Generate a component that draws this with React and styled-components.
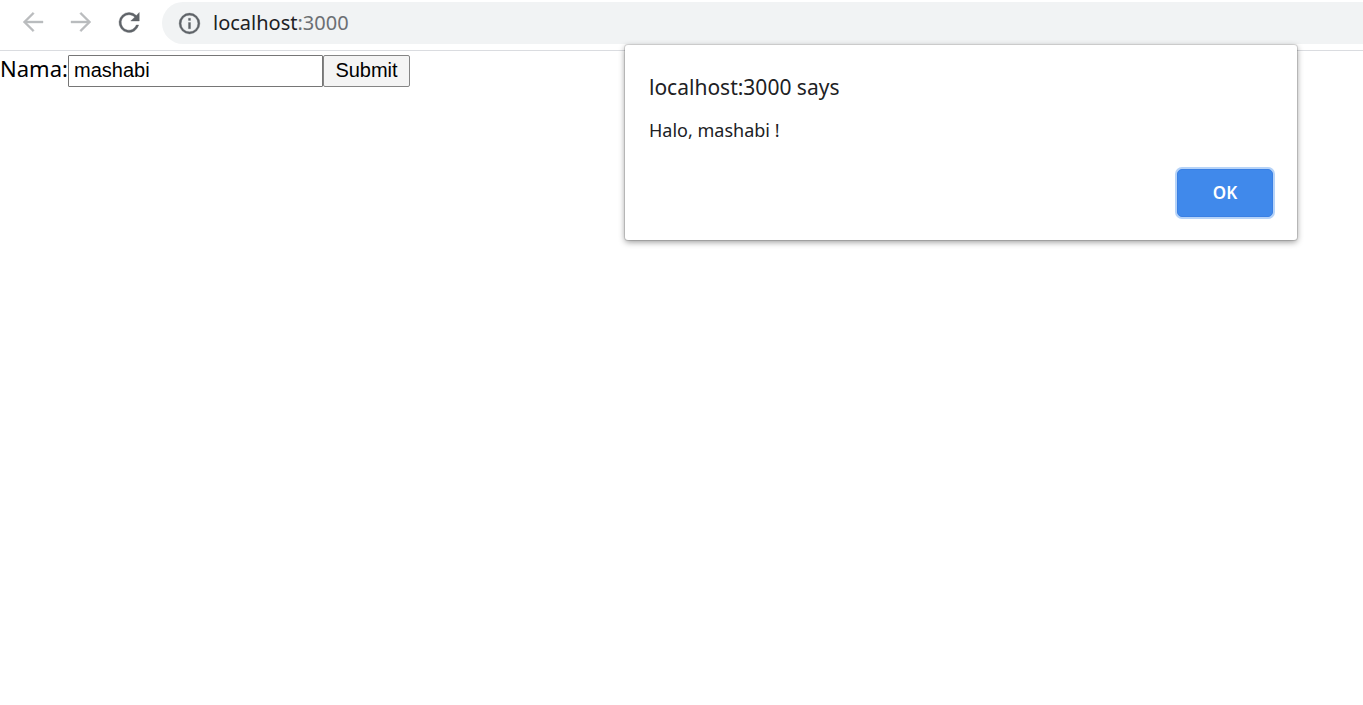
import React from "react";
import styled, { createGlobalStyle } from "styled-components";

const GlobalStyle = createGlobalStyle`
  * { box-sizing: border-box; }
  body {
    margin: 0;
    background: #fff;
    font-family: "Noto Sans", "Open Sans", sans-serif;
  }
`;

const Page = styled.div`
  position: relative;
  min-height: 100vh;
`;

const Toolbar = styled.header`
  display: flex;
  align-items: flex-start;
  height: 51px;
  padding: 2px 0 0 18px;
  border-bottom: 1px solid #dadce0;
`;

const NavButtons = styled.nav`
  display: flex;
  gap: 18px;
  padding: 5px 18px 0 0;
`;

const NavButton = styled.button`
  display: flex;
  width: 30px;
  height: 30px;
  padding: 0;
  border: 0;
  background: none;
  color: ${({ disabled }) => (disabled ? "#babcbe" : "#5f6368")};
`;

const Icon = styled.svg`
  width: ${({ $size }) => $size}px;
  height: ${({ $size }) => $size}px;
  fill: currentColor;
  stroke: currentColor;
  stroke-width: 0.3;
`;

const AddressBar = styled.div`
  flex: 1;
  display: flex;
  align-items: center;
  gap: 11px;
  height: 42px;
  padding-left: 15px;
  border-radius: 21px 0 0 21px;
  background: #f1f3f4;
  color: #5f6368;
`;

const Address = styled.span`
  font-size: 20px;
  line-height: 28px;
  color: #6b6f73;
`;

const Host = styled.span`
  color: #202124;
`;

const Form = styled.form`
  display: flex;
  align-items: flex-start;
  padding-top: 4px;
`;

const Label = styled.label`
  width: 68px;
  font-size: 22px;
  line-height: 26px;
  color: #000;
`;

const NameInput = styled.input`
  width: 255px;
  height: 32px;
  padding: 0 5px 2px;
  border: 1px solid #767676;
  border-radius: 1px;
  outline: 0;
  background: #fff;
  color: #000;
  font: 20px "Liberation Sans", Arial, sans-serif;
`;

const SubmitButton = styled.button`
  width: 87px;
  height: 32px;
  padding: 0 0 2px;
  border: 1px solid #858585;
  border-radius: 2px;
  background: #f4f4f4;
  color: #000;
  font: 20px "Liberation Sans", Arial, sans-serif;
`;

const Dialog = styled.section`
  position: absolute;
  top: 45px;
  right: 66px;
  display: flex;
  flex-direction: column;
  width: 672px;
  max-width: calc(100% - 66px);
  padding: 28px 24px;
  padding-bottom: 23px;
  border-radius: 3px;
  background: #fff;
  box-shadow: 0 0 0 1px rgba(0, 0, 0, 0.12), 0 2px 6px rgba(0, 0, 0, 0.42);
  color: #202124;
`;

const DialogTitle = styled.h1`
  margin: 0 0 16px;
  font-size: 21px;
  font-weight: 400;
  line-height: 28px;
`;

const DialogMessage = styled.p`
  margin: 0 0 26px;
  font-size: 18px;
  line-height: 26px;
`;

const OkButton = styled.button`
  align-self: flex-end;
  width: 96px;
  height: 48px;
  padding: 0 0 2px;
  border: 1px solid #3a80e4;
  border-radius: 5px;
  background: #4089eb;
  box-shadow: 0 0 0 2px #b6d3f8;
  color: #fff;
  font: 600 17px "Noto Sans", "Open Sans", sans-serif;
`;

export default function App() {
  return (
    <Page>
      <GlobalStyle />
      <Toolbar>
        <NavButtons aria-label="Browser">
          <NavButton disabled aria-label="Back">
            <Icon $size={30} viewBox="0 0 24 24">
              <path d="M20 11.2H7.1l5.9-5.9L11.9 4.2 4 12l7.9 7.8 1.1-1.1-5.9-5.9H20z" />
            </Icon>
          </NavButton>
          <NavButton disabled aria-label="Forward">
            <Icon $size={30} viewBox="0 0 24 24">
              <path d="M4 11.2h12.9L11 5.3l1.1-1.1L20 12l-7.9 7.8-1.1-1.1 5.9-5.9H4z" />
            </Icon>
          </NavButton>
          <NavButton aria-label="Reload">
            <Icon $size={30} viewBox="0 0 24 24">
              <path d="M17.9 6.8A8 8 0 0 0 12 4.4a8 8 0 1 0 7.73 10h-1.9A6.2 6.2 0 1 1 12 6.2c1.7 0 3.3.7 4.5 1.9L13.4 11.2h6.8V4.4z" />
            </Icon>
          </NavButton>
        </NavButtons>
        <AddressBar>
          <Icon $size={25} viewBox="0 0 24 24" aria-hidden="true">
            <path d="M11 7h2v2h-2zm0 4h2v6h-2zm1-9a10 10 0 1 0 0 20 10 10 0 0 0 0-20zm0 18a8 8 0 1 1 0-16 8 8 0 0 1 0 16z" />
          </Icon>
          <Address>
            <Host>localhost</Host>:3000
          </Address>
        </AddressBar>
      </Toolbar>

      <Form onSubmit={(event) => event.preventDefault()}>
        <Label htmlFor="nama">Nama:</Label>
        <NameInput id="nama" type="text" defaultValue="mashabi" />
        <SubmitButton type="submit">Submit</SubmitButton>
      </Form>

      <Dialog role="alertdialog" aria-labelledby="says" aria-describedby="message">
        <DialogTitle id="says">localhost:3000 says</DialogTitle>
        <DialogMessage id="message">Halo, mashabi !</DialogMessage>
        <OkButton type="button">OK</OkButton>
      </Dialog>
    </Page>
  );
}
